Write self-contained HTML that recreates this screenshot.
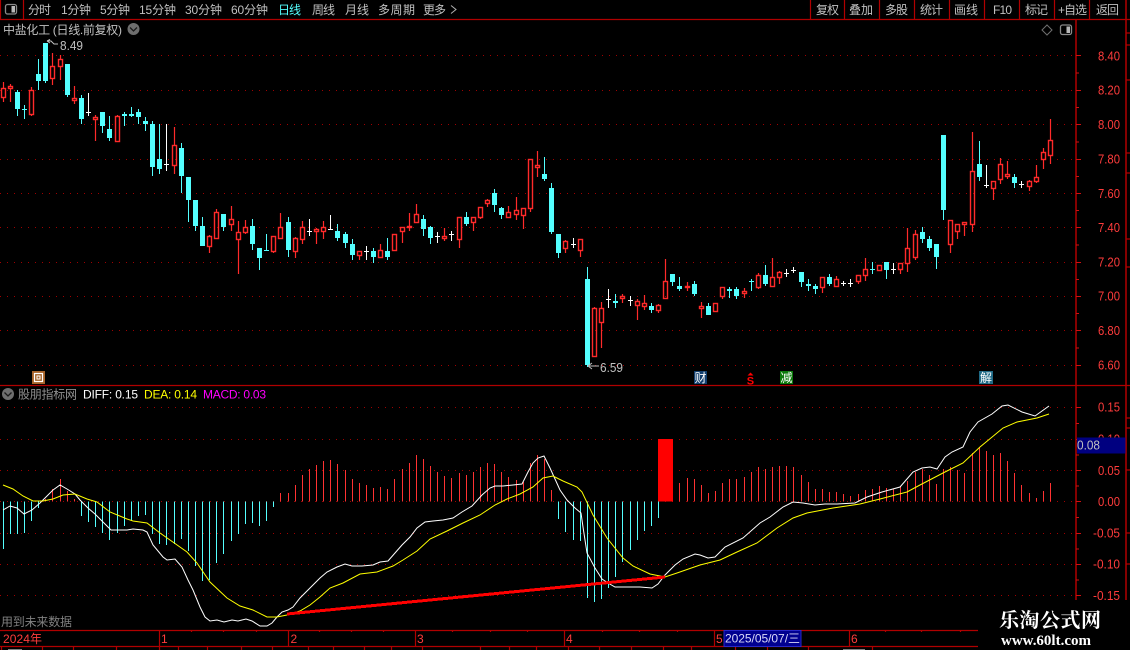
<!DOCTYPE html>
<html lang="zh">
<head>
<meta charset="utf-8">
<title>中盐化工</title>
<style>
html,body{margin:0;padding:0;background:#000;width:1130px;height:650px;overflow:hidden}
svg{display:block}
text{font-family:"Liberation Sans","Noto Sans CJK SC",sans-serif;font-size:12px;fill:#c0c0c0}
.p{fill:#ff3c3c;font-size:13px}
.cy{fill:#54ffff}
.g{fill:#808080}
.cr{shape-rendering:crispEdges}
</style>
</head>
<body>
<svg id="s" xmlns="http://www.w3.org/2000/svg" width="1130" height="650" viewBox="0 0 1130 650">
<rect width="1130" height="650" fill="#000"/>
<g id="grid"></g>
<g id="chart"></g>

<!-- frame lines -->
<g stroke="#b00000" stroke-width="1.2" fill="none">
<path d="M0 19.5H1130M0 385.5H1130"/>
<path d="M0.5 0V19M23.5 0V19M810.5 0V19M844.5 0V19M879.5 0V19M914.5 0V19M949.5 0V19M984.5 0V19M1019.5 0V19M1054.5 0V19M1089.5 0V19"/>
<path d="M1076 19V600" stroke-width="1.5"/>
<path d="M1126 0V600" stroke-width="1.5"/>
<path d="M0 630.5H978M0 646.5H978"/>
<path d="M159.5 630V646M288.5 630V646M415.5 630V646M564.5 630V646M714.5 630V646M849.5 630V646"/>
<path d="M191.5 630v2M223.5 630v2M256.5 630v2M319.5 630v2M351.5 630v2M383.5 630v2M452.5 630v2M490.5 630v2M527.5 630v2M602.5 630v2M639.5 630v2M677.5 630v2M885.5 630v2M921.5 630v2M960.5 630v2"/>
<path d="M1.5 646v4M42.5 646v4M73.5 646v4M116.5 646v4M159.5 646v4M178.5 646v4M207.5 646v4M241.5 646v4M272.5 646v4M308.5 646v4M333.5 646v4M364.5 646v4M391.5 646v4M422.5 646v4M480.5 646v4M509.5 646v4M536.5 646v4M568.5 646v4M599.5 646v4M631.5 646v4M663.5 646v4M691.5 646v4M735.5 646v4M767.5 646v4M808.5 646v4M872.5 646v4"/>
<path d="M1126 33h4M1126 45h4M1126 80h4M1126 153h4M1126 173h4M1126 239h4M1126 267h4M1126 418h4M1126 428h4M1126 470h4M1126 533h4M1126 564h4"/>
</g>
<g id="ticks" stroke="#d01010" stroke-width="1" fill="none"></g>
<path d="M8 649.5h14M843 649.5h22" stroke="#808080" stroke-width="1"/>

<!-- left icon -->
<g>
<rect x="5.5" y="4.5" width="11" height="9.5" rx="2" fill="none" stroke="#8a8a8a" stroke-width="1.3"/>
<rect x="11.5" y="6" width="3.5" height="6.5" fill="#b8b8b8"/>
</g>

<!-- top bar text -->
<text x="28" y="14" textLength="23">分时</text>
<text x="61" y="14" textLength="30">1分钟</text>
<text x="100" y="14" textLength="30">5分钟</text>
<text x="139" y="14" textLength="37">15分钟</text>
<text x="185" y="14" textLength="37">30分钟</text>
<text x="231" y="14" textLength="37">60分钟</text>
<text x="278" y="14" textLength="23" class="cy">日线</text>
<text x="312" y="14" textLength="23">周线</text>
<text x="345" y="14" textLength="24">月线</text>
<text x="378" y="14" textLength="37">多周期</text>
<text x="423" y="14" textLength="23">更多</text>
<path d="M451 5.5l5 4-5 4" fill="none" stroke="#b0b0b0" stroke-width="1"/>
<text x="816" y="14" textLength="23">复权</text>
<text x="849" y="14" textLength="24">叠加</text>
<text x="885" y="14" textLength="23">多股</text>
<text x="920" y="14" textLength="23">统计</text>
<text x="954" y="14" textLength="24">画线</text>
<text x="993" y="14" textLength="19">F10</text>
<text x="1025" y="14" textLength="23">标记</text>
<text x="1058" y="14" textLength="29">+自选</text>
<text x="1096" y="14" textLength="23">返回</text>

<!-- title -->
<text x="3" y="34" textLength="119">中盐化工 (日线.前复权)</text>
<circle cx="133.5" cy="29" r="6" fill="#6e6e6e"/>
<path d="M130 27.5l3.5 3.5 3.5-3.5" fill="none" stroke="#1a1a1a" stroke-width="1.3"/>
<path d="M1047 25l5 5-5 5-5-5z" fill="none" stroke="#707070" stroke-width="1"/>
<rect x="1060.5" y="25" width="11" height="9.5" rx="2" fill="none" stroke="#8a8a8a" stroke-width="1.3"/>
<rect x="1066.5" y="26.5" width="3.5" height="6.5" fill="#b8b8b8"/>

<!-- price labels -->
<text x="1098" y="60.5" class="p" textLength="22" lengthAdjust="spacingAndGlyphs">8.40</text>
<text x="1098" y="94.5" class="p" textLength="22" lengthAdjust="spacingAndGlyphs">8.20</text>
<text x="1098" y="129" class="p" textLength="22" lengthAdjust="spacingAndGlyphs">8.00</text>
<text x="1098" y="163.5" class="p" textLength="22" lengthAdjust="spacingAndGlyphs">7.80</text>
<text x="1098" y="198" class="p" textLength="22" lengthAdjust="spacingAndGlyphs">7.60</text>
<text x="1098" y="232" class="p" textLength="22" lengthAdjust="spacingAndGlyphs">7.40</text>
<text x="1098" y="266.5" class="p" textLength="22" lengthAdjust="spacingAndGlyphs">7.20</text>
<text x="1098" y="300.5" class="p" textLength="22" lengthAdjust="spacingAndGlyphs">7.00</text>
<text x="1098" y="335" class="p" textLength="22" lengthAdjust="spacingAndGlyphs">6.80</text>
<text x="1098" y="369.5" class="p" textLength="22" lengthAdjust="spacingAndGlyphs">6.60</text>

<!-- hi/lo labels -->
<path d="M47 41l3-1.5M47 41l3 2M47 41h4l3 3h4" fill="none" stroke="#c0c0c0" stroke-width="1"/>
<text x="60" y="50" textLength="23" lengthAdjust="spacingAndGlyphs" style="font-size:13px">8.49</text>
<path d="M588 366h11M588 366l4-3M588 366l4 3" fill="none" stroke="#c0c0c0" stroke-width="1"/>
<text x="600" y="372" textLength="23" lengthAdjust="spacingAndGlyphs" style="font-size:13px">6.59</text>

<!-- markers -->
<rect x="32" y="371" width="13" height="13" fill="#a8642a"/>
<rect x="34.5" y="373.5" width="8" height="8" fill="none" stroke="#fff" stroke-width="1.2"/>
<rect x="37" y="376" width="3" height="3" fill="none" stroke="#fff" stroke-width="1"/>
<rect x="694" y="371" width="13" height="13" fill="#123f6e"/>
<text x="694.5" y="382" style="font-size:12px;fill:#fff">财</text>
<path d="M750.5 372.5l3 3h-6z" fill="#ff0000"/>
<text x="746.8" y="384.5" style="font-size:11px;font-weight:bold;fill:#ff0000">S</text>
<rect x="780" y="371" width="13" height="13" fill="#0a7a0a"/>
<text x="780.5" y="382" style="font-size:12px;fill:#fff">减</text>
<rect x="979" y="371" width="14" height="13" fill="#1f6a86"/>
<text x="980" y="382" style="font-size:12px;fill:#fff">解</text>

<!-- macd title -->
<circle cx="8" cy="394" r="6" fill="#6e6e6e"/>
<path d="M4.5 392.5l3.5 3.5 3.5-3.5" fill="none" stroke="#1a1a1a" stroke-width="1.3"/>
<text x="18" y="398.5" textLength="59" style="fill:#909090">股朋指标网</text>
<text x="83" y="398.5" textLength="55" style="fill:#fff">DIFF: 0.15</text>
<text x="144" y="398.5" textLength="53" style="fill:#ffff00">DEA: 0.14</text>
<text x="203" y="398.5" textLength="63" style="fill:#ff00ff">MACD: 0.03</text>

<!-- macd axis -->
<text x="1098" y="411.5" class="p" textLength="22" lengthAdjust="spacingAndGlyphs">0.15</text>
<text x="1098" y="443.5" class="p" textLength="22" lengthAdjust="spacingAndGlyphs">0.10</text>
<text x="1098" y="475" class="p" textLength="22" lengthAdjust="spacingAndGlyphs">0.05</text>
<text x="1098" y="506" class="p" textLength="22" lengthAdjust="spacingAndGlyphs">0.00</text>
<text x="1093" y="537.5" class="p" textLength="27" lengthAdjust="spacingAndGlyphs">-0.05</text>
<text x="1093" y="568.5" class="p" textLength="27" lengthAdjust="spacingAndGlyphs">-0.10</text>
<text x="1093" y="600" class="p" textLength="27" lengthAdjust="spacingAndGlyphs">-0.15</text>
<rect x="1077" y="437.5" width="48.5" height="16" fill="#000080"/>
<text x="1077" y="449.5" textLength="23" lengthAdjust="spacingAndGlyphs" style="font-size:13px">0.08</text>

<text x="1" y="626" textLength="71" class="g">用到未来数据</text>

<!-- time axis -->
<text x="3" y="643" textLength="39" style="fill:#ff3c3c">2024年</text>
<text x="161" y="643" style="fill:#ff3c3c">1</text>
<text x="290.5" y="643" style="fill:#ff3c3c">2</text>
<text x="417" y="643" style="fill:#ff3c3c">3</text>
<text x="566" y="643" style="fill:#ff3c3c">4</text>
<text x="716" y="643" style="fill:#ff3c3c">5</text>
<text x="851" y="643" style="fill:#ff3c3c">6</text>
<rect x="724" y="630.5" width="77" height="16" fill="#000090" stroke="#2828c8" stroke-width="1"/>
<text x="725" y="642.5" textLength="75" style="fill:#d8d8f8">2025/05/07/三</text>

<!-- watermark -->
<rect x="978" y="600" width="152" height="50" fill="#000"/>
<text x="999" y="627" textLength="102" style="font-family:'Noto Serif CJK SC',serif;font-size:20px;font-weight:bold;fill:#fff">乐淘公式网</text>
<text x="1001" y="645" textLength="90" style="font-family:'Liberation Serif',serif;font-size:15px;font-weight:bold;fill:#fff">www.60lt.com</text>
</svg>
<script>
(function(){
var C="r 82 88 98 102|r 84 86 89 102|c 90 92 109 116|c 105 109 110 119|r 87 90 115 116|c 59 74 81 90|c 43 43 81 83|r 53 66 79 85|r 55 59 67 80|c 64 64 95 97|r 86 98 101 104|c 95 98 119 124|w 93 112 112 116|r 115 117 120 141|c 112 112 126 133|c 116 129 138 141|r 115 116 142 142|c 112 114 116 126|c 107 114 116 117|c 109 112 117 124|c 117 121 124 131|c 121 124 167 176|c 124 159 169 174|w 124 164 164 171|r 127 145 166 174|c 143 148 176 193|c 177 177 200 222|c 200 200 226 231|c 217 226 246 246|r 235 236 247 253|r 209 212 239 239|c 214 214 227 231|r 206 219 225 231|r 221 232 240 274|r 220 227 233 234|c 219 226 244 250|c 248 248 258 270|c 234 250 251 251|r 236 236 252 253|r 213 227 239 239|c 217 222 250 257|r 237 238 252 258|"
+"r 221 227 240 244|w 219 231 231 236|r 228 229 232 244|r 221 227 232 239|w 215 229 229 230|c 224 231 238 241|c 232 234 243 248|c 239 244 255 260|r 251 251 256 260|w 246 251 251 260|c 248 251 257 263|r 244 250 258 258|c 238 251 257 260|r 234 234 251 251|r 227 227 232 243|r 213 226 228 231|r 204 214 223 223|c 215 219 229 236|c 226 227 238 244|w 232 236 236 243|r 228 236 239 241|w 231 234 234 241|r 217 217 240 248|c 212 217 224 226|r 217 217 223 231|r 207 207 218 219|r 199 200 204 207|c 189 193 205 212|c 207 208 215 219|r 206 212 218 218|r 197 210 215 220|r 208 208 216 229|r 159 159 209 212|r 151 165 168 177|c 157 174 179 181|c 183 188 232 234|c 234 234 253 258|r 240 241 249 253|w 238 244 244 248|r 239 239 251 257|"
+"c 267 279 365 367|r 307 308 357 357|r 302 308 323 348|w 289 299 299 308|c 294 301 303 308|r 294 296 299 303|w 296 300 300 306|r 299 301 306 320|r 295 303 307 310|c 303 306 310 313|r 304 305 311 313|r 259 281 299 299|c 274 274 282 286|c 277 286 289 291|r 282 286 288 291|c 281 284 294 296|r 302 306 309 318|c 303 306 315 315|r 303 303 312 312|r 287 287 297 299|c 287 289 291 298|c 287 289 296 299|r 288 291 294 298|c 279 281 282 291|r 273 275 288 289|c 265 275 284 286|r 258 277 287 287|r 271 272 278 284|w 269 273 273 277|w 267 270 270 273|c 272 272 282 287|c 279 284 286 291|c 284 286 289 294|r 277 277 288 293|c 274 277 284 286|r 276 279 287 287|w 281 283 283 286|w 279 283 283 287|r 275 275 282 284|r 258 269 276 281|c 262 269 270 274|r 265 265 271 271|c 262 262 270 279|w 263 269 269 274|r 263 263 270 274|r 228 248 264 272|r 230 234 258 260|c 227 232 239 243|c 236 239 248 251|c 244 244 257 269|c 135 135 210 220|r 220 220 245 253|r 224 224 232 239|r 222 222 225 236|r 132 171 225 232|c 141 164 177 181|w 165 185 185 188|r 181 181 189 200|r 158 164 180 184|r 161 174 177 179|c 174 177 183 188|w 181 184 184 188|r 180 181 187 191|r 165 177 182 183|r 148 152 160 169|r 119 140 156 164";
var M=[549,534,534,533,521,508,499,489,479,491,499,516,522,527,533,540,533,526,521,516,515,534,544,545,544,539,551,566,581,580,563,554,541,534,524,523,526,521,507,493,493,485,
475,469,465,461,460,464,470,479,483,485,488,487,489,479,469,463,455,459,466,472,476,478,473,475,472,467,463,464,472,477,480,482,463,455,459,490,519,532,540,541,598,602,599,588,577,562,550,540,531,526,518,501,501,483,478,479,
485,493,491,483,479,479,477,472,467,469,467,466,466,467,475,482,489,489,492,492,494,496,494,490,489,486,488,489,486,481,472,469,475,484,469,467,470,473,453,447,451,455,453,461,473,485,493,498,491,483];
var W="3,510 10,506 17,508 24,514 32,510 40,503 47,496 53,490 60,485 67,489 75,494 80,500 88,508 95,514 103,522 111,530 127,530 133,529 143,530 147,532 153,545 163,557 167,560 175,559 182,567 188,580 193,590 200,607 205,617 210,621 217,620 224,622 232,620 238,621 246,619 252,621 260,626 267,626 272,623 277,617 282,612 288,610 293,607 300,598 310,588 320,578 327,572 337,567 345,564 352,566 362,566 373,565 380,562 388,561 395,553 402,545 410,537 417,528 425,522 433,521 443,520 453,518 462,512 472,506 482,495 490,488 495,486 503,486 513,485 522,484 528,472 533,463 538,458 544,456 550,468 560,490 567,500 575,508 581,513 583,527 587,553 595,568 602,579 608,583 615,587 628,587 640,587 652,588 658,584 665,575 675,565 683,559 695,554 700,555 708,558 715,557 725,547 743,538 760,523 770,517 783,507 793,502 803,503 815,505 825,504 837,504 855,503 867,497 882,492 900,487 913,472 922,468 930,467 937,469 945,457 952,452 963,447 970,432 978,422 992,414 1002,406 1008,405 1022,412 1035,416 1042,411 1049,406";
var Y="3,485 13,489 23,496 33,501 43,501 53,499 63,495 75,494 87,499 97,502 110,512 127,519 133,521 147,523 160,533 170,540 187,552 197,563 210,582 227,598 240,606 253,610 267,617 277,617 287,615 300,611 310,605 320,597 330,588 343,583 360,574 377,572 393,566 403,560 417,551 430,539 447,531 463,523 480,515 495,505 507,499 520,494 533,487 543,478 553,476 563,481 577,487 582,492 593,515 607,538 623,558 633,566 650,574 665,577 677,573 700,565 720,560 737,552 757,543 777,528 793,518 807,513 833,508 860,504 880,499 907,492 920,485 943,473 963,463 980,447 1003,428 1017,422 1037,418 1049,414";
function X(i){return Math.floor(3+7.125*i)+0.5}
var o='',i,c,x;
var rows=C.split('|'),wr='',wc='',ww='',bc='',br='';
for(i=0;i<rows.length;i++){
 c=rows[i].split(' ');x=X(i);
 var h=+c[1],t=+c[2],b=+c[3],l=+c[4];
 if(c[0]=='r'){
  br+='<rect x="'+(x-2)+'" y="'+(t+0.5)+'" width="4" height="'+Math.max(b-t-1,1)+'"/>';
  if(h<t)wr+='M'+x+' '+h+'V'+t;
  if(l>b)wr+='M'+x+' '+b+'V'+l;
 }else if(c[0]=='c'){
  bc+='<rect x="'+(x-2.5)+'" y="'+t+'" width="5" height="'+Math.max(b-t,1)+'"/>';
  wc+='M'+x+' '+h+'V'+l;
 }else{
  ww+='M'+x+' '+h+'V'+l+'M'+(x-2.5)+' '+t+'.5h5';
 }
}
var mr='',mc='';
for(i=0;i<M.length;i++){
 x=X(i);
 if(i==93||i==94)continue;
 if(M[i]<501)mr+='M'+x+' 501.5V'+M[i];
 else if(M[i]>501)mc+='M'+x+' 501.5V'+M[i];
}
o+='<g class="cr">';
o+='<path d="'+mc+'" stroke="#54ffff" stroke-width="1" fill="none"/>';
o+='<path d="'+mr+'" stroke="#ff3232" stroke-width="1" fill="none"/>';
o+='<path d="'+wc+'" stroke="#54ffff" stroke-width="1" fill="none"/>';
o+='<g fill="#54ffff">'+bc+'</g>';
o+='<path d="'+ww+'" stroke="#fff" stroke-width="1" fill="none"/>';
o+='<rect x="658" y="439" width="15" height="62.5" fill="#ff0000"/>';
o+='</g>';
o+='<path d="'+wr+'" stroke="#ff2a2a" stroke-width="1.2" fill="none"/>';
o+='<g fill="none" stroke="#ff2a2a" stroke-width="1.4">'+br+'</g>';
o+='<polyline points="'+W+'" fill="none" stroke="#fff" stroke-width="1"/>';
o+='<polyline points="'+Y+'" fill="none" stroke="#ffff00" stroke-width="1"/>';
o+='<path class="cr" d="M287 614L665 577" stroke="#ff0000" stroke-width="3" fill="none"/>';
document.getElementById('chart').innerHTML=o;
var G=[55.5,90.5,124.5,159.5,193.5,227.5,262.5,296.5,330.5,365.5,407.5,439.5,470.5,501.5,533.5,564.5,595.5];
var g='',tk='';
for(i=0;i<G.length;i++){
 g+='M0 '+G[i]+'H1075';
 tk+='M1076 '+G[i]+'h5';
 if(i<9)tk+='M1076 '+((G[i]+G[i+1])/2)+'h3';
 if(i>=10&&i<16)tk+='M1076 '+((G[i]+G[i+1])/2)+'h3';
}
document.getElementById('grid').innerHTML='<path d="'+g+'" stroke="#a00000" stroke-width="1" stroke-dasharray="1 6" fill="none"/>';
document.getElementById('ticks').innerHTML='<path d="'+tk+'"/>';
})();
</script>
</body>
</html>
